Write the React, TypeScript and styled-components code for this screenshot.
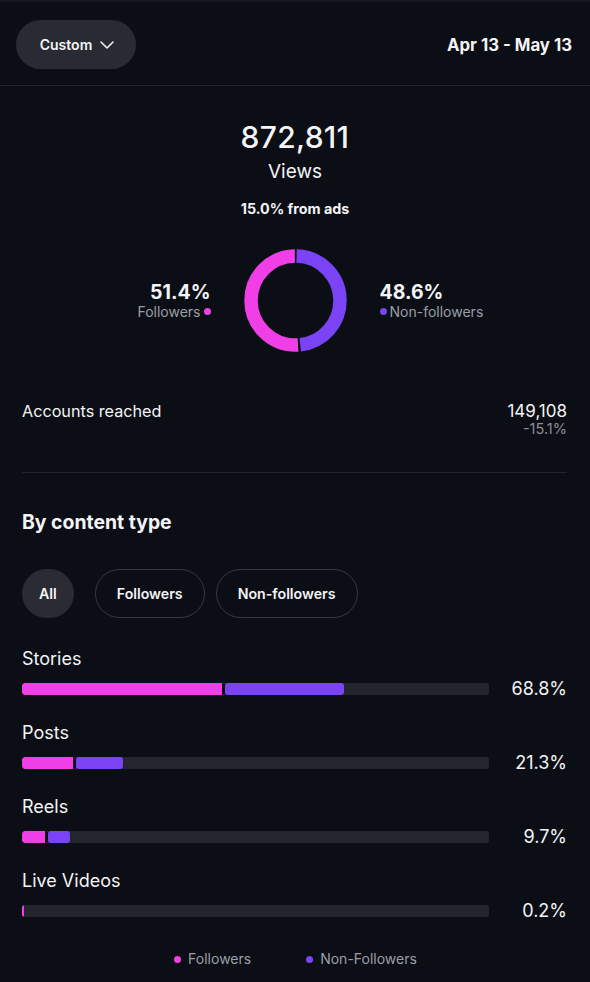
import React from "react";
import styled, { createGlobalStyle } from "styled-components";

const PINK = "#f03fe6";
const PURPLE = "#7a43f5";
const BG = "#0b0e15";

const Global = createGlobalStyle`
  html, body { margin: 0; padding: 0; background: ${BG}; }
  body { font-family: Inter, "Noto Sans", "Liberation Sans", sans-serif; color: #f4f4f6; -webkit-font-smoothing: antialiased; }
`;

const Page = styled.div`
  width: 590px;
  min-height: 982px;
  background: ${BG};
  border-top: 2px solid #15181f;
  box-sizing: border-box;
`;

const Header = styled.header`
  display: flex;
  align-items: center;
  justify-content: space-between;
  padding: 18px 18px 16px 16px;
  border-bottom: 1px solid #24262d;
`;

const DropButton = styled.button`
  display: flex;
  align-items: center;
  gap: 8px;
  height: 49px;
  width: 120px;
  justify-content: center;
  border: none;
  border-radius: 25px;
  background: #292b32;
  color: #f4f4f6;
  font-family: inherit;
  font-size: 14px;
  font-weight: 600;
  padding: 0 0 0 2px;
`;

const DateRange = styled.div`
  font-size: 16.8px;
  font-weight: 700;
`;

const Summary = styled.section`
  display: flex;
  flex-direction: column;
  align-items: center;
  padding-top: 33px;
`;

const BigNumber = styled.div`
  font-size: 30px;
  line-height: 36px;
  font-weight: 500;
  letter-spacing: 0.3px;
`;

const BigLabel = styled.div`
  margin-top: 5px;
  font-size: 19px;
  line-height: 24px;
  font-weight: 400;
`;

const AdsNote = styled.div`
  margin-top: 16px;
  font-size: 14.3px;
  line-height: 18px;
  font-weight: 700;
`;

const DonutRow = styled.div`
  margin-top: 31px;
  display: flex;
  align-items: center;
  gap: 33px;
`;

const Side = styled.div<{ $align: "left" | "right" }>`
  width: 106px;
  display: flex;
  flex-direction: column;
  align-items: ${(p) => (p.$align === "right" ? "flex-end" : "flex-start")};
`;

const SidePct = styled.div`
  font-size: 19.5px;
  line-height: 22px;
  font-weight: 700;
`;

const SideLabel = styled.div`
  display: flex;
  align-items: center;
  gap: 3px;
  font-size: 14px;
  line-height: 18px;
  color: #9c9ea6;
`;

const Dot = styled.span<{ $color: string }>`
  width: 7px;
  height: 7px;
  border-radius: 50%;
  background: ${(p) => p.$color};
  display: inline-block;
`;

const Content = styled.div`
  padding: 0 23px 0 22px;
`;

const StatRow = styled.div`
  display: flex;
  justify-content: space-between;
  align-items: flex-start;
  margin-top: 48px;
  padding-bottom: 36px;
  border-bottom: 1px solid #23252c;
`;

const StatLabel = styled.div`
  font-size: 16.2px;
  line-height: 22px;
`;

const StatValues = styled.div`
  display: flex;
  flex-direction: column;
  align-items: flex-end;
`;

const StatValue = styled.div`
  font-size: 17px;
  line-height: 22px;
`;

const StatChange = styled.div`
  font-size: 14.5px;
  line-height: 14px;
  color: #8d8f97;
`;

const SectionTitle = styled.h2`
  margin: 37px 0 0;
  font-size: 19.4px;
  line-height: 24px;
  font-weight: 700;
`;

const Chips = styled.div`
  display: flex;
  gap: 11px;
  margin-top: 35px;
`;

const Chip = styled.button<{ $active?: boolean }>`
  height: 49px;
  padding: 0 ${(p) => (p.$active ? "16px" : "21px")};
  margin-right: ${(p) => (p.$active ? "10px" : "0")};
  border-radius: 25px;
  border: 1px solid ${(p) => (p.$active ? "#2a2c33" : "#383a41")};
  background: ${(p) => (p.$active ? "#2a2c33" : "transparent")};
  color: #f4f4f6;
  font-family: inherit;
  font-size: 14.2px;
  font-weight: 600;
`;

const Rows = styled.div`
  margin-top: 29px;
  display: flex;
  flex-direction: column;
  gap: 20px;
`;

const TypeRow = styled.div`
  display: flex;
  flex-direction: column;
  gap: 6px;
`;

const TypeLabel = styled.div`
  font-size: 18px;
  line-height: 24px;
`;

const BarLine = styled.div`
  display: flex;
  align-items: center;
  height: 24px;
`;

const Track = styled.div`
  width: 467px;
  height: 12px;
  border-radius: 3px;
  background: #24262e;
  display: flex;
  overflow: hidden;
`;

const Segment = styled.div<{ $color: string; $split?: boolean }>`
  height: 100%;
  background: ${(p) => p.$color};
  border-radius: 3px;
  border-right: ${(p) => (p.$split ? `3px solid ${BG}` : "none")};
  box-sizing: border-box;
  flex: none;
`;

const Pct = styled.div`
  flex: 1;
  text-align: right;
  font-size: 18px;
  line-height: 24px;
`;

const Legend = styled.div`
  display: flex;
  justify-content: center;
  gap: 55px;
  margin-top: 27px;
  padding-left: 2px;
`;

const LegendItem = styled.div`
  display: flex;
  align-items: center;
  gap: 7px;
  font-size: 14px;
  line-height: 18px;
  color: #9c9ea6;
`;

const Chevron = () => (
  <svg width="14" height="8" viewBox="0 0 14 8" fill="none">
    <path d="M1 1l6 6 6-6" stroke="#f4f4f6" strokeWidth="1.5" strokeLinecap="round" strokeLinejoin="round" />
  </svg>
);

const Donut = () => {
  const r = 44.5;
  const c = 2 * Math.PI * r;
  const gap = 2.2;
  const purple = 0.486 * c;
  const pink = 0.514 * c;
  return (
    <svg width="103" height="103" viewBox="0 0 103 103">
      <g transform="rotate(-90 51.5 51.5)">
        <circle
          cx="51.5"
          cy="51.5"
          r={r}
          fill="none"
          stroke={PURPLE}
          strokeWidth="13.5"
          strokeDasharray={`${purple - gap} ${c}`}
          strokeDashoffset={-gap / 2}
        />
        <circle
          cx="51.5"
          cy="51.5"
          r={r}
          fill="none"
          stroke={PINK}
          strokeWidth="13.5"
          strokeDasharray={`${pink - gap} ${c}`}
          strokeDashoffset={-(purple + gap / 2)}
        />
      </g>
    </svg>
  );
};

const types = [
  { name: "Stories", pct: "68.8%", followers: 200, non: 119 },
  { name: "Posts", pct: "21.3%", followers: 51, non: 47 },
  { name: "Reels", pct: "9.7%", followers: 23, non: 22 },
  { name: "Live Videos", pct: "0.2%", followers: 1.5, non: 0 },
];

export default function App() {
  return (
    <Page>
      <Global />
      <Header>
        <DropButton>
          Custom <Chevron />
        </DropButton>
        <DateRange>Apr 13 - May 13</DateRange>
      </Header>
      <Summary>
        <BigNumber>872,811</BigNumber>
        <BigLabel>Views</BigLabel>
        <AdsNote>15.0% from ads</AdsNote>
        <DonutRow>
          <Side $align="right">
            <SidePct>51.4%</SidePct>
            <SideLabel>
              Followers <Dot $color={PINK} />
            </SideLabel>
          </Side>
          <Donut />
          <Side $align="left">
            <SidePct>48.6%</SidePct>
            <SideLabel>
              <Dot $color={PURPLE} />
              Non-followers
            </SideLabel>
          </Side>
        </DonutRow>
      </Summary>
      <Content>
        <StatRow>
          <StatLabel>Accounts reached</StatLabel>
          <StatValues>
            <StatValue>149,108</StatValue>
            <StatChange>-15.1%</StatChange>
          </StatValues>
        </StatRow>
        <SectionTitle>By content type</SectionTitle>
        <Chips>
          <Chip $active>All</Chip>
          <Chip>Followers</Chip>
          <Chip>Non-followers</Chip>
        </Chips>
        <Rows>
          {types.map((t) => (
            <TypeRow key={t.name}>
              <TypeLabel>{t.name}</TypeLabel>
              <BarLine>
                <Track>
                  <Segment
                    $color={PINK}
                    $split={t.non > 0}
                    style={{ width: t.followers + (t.non ? 3 : 0) }}
                  />
                  {t.non > 0 && <Segment $color={PURPLE} style={{ width: t.non }} />}
                </Track>
                <Pct>{t.pct}</Pct>
              </BarLine>
            </TypeRow>
          ))}
        </Rows>
        <Legend>
          <LegendItem>
            <Dot $color={PINK} />
            Followers
          </LegendItem>
          <LegendItem>
            <Dot $color={PURPLE} />
            Non-Followers
          </LegendItem>
        </Legend>
      </Content>
    </Page>
  );
}
